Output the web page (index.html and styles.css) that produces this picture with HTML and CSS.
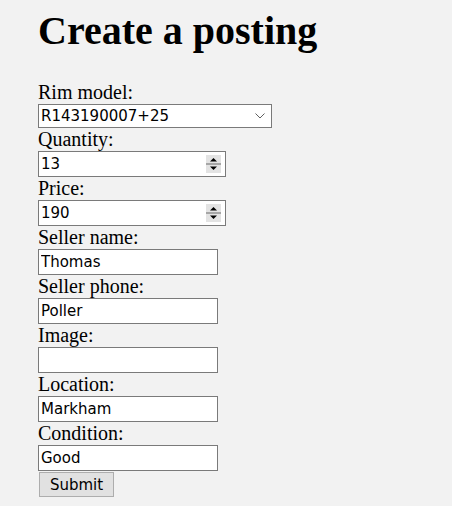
FILE: index.html
```html
<!DOCTYPE html>
<html>
<head>
<meta charset="utf-8">
<link rel="stylesheet" href="styles.css">
</head>
<body>
<div class="page">
  <h1 class="title">Create a posting</h1>
  <form class="form">
    <label class="label">Rim model:</label>
    <select class="select"><option>R143190007+25</option></select>
    <label class="label">Quantity:</label>
    <div class="num">
      <input class="num-input" type="text" value="13">
      <span class="spin"><svg width="15" height="18" viewBox="0 0 15 18"><rect x="0" y="0" width="15" height="18" fill="#e3e3e3"/><rect x="0" y="8" width="15" height="2" fill="#a6a6a6"/><path d="M7.5 3 L11 6.5 L4 6.5 Z" fill="#000"/><path d="M4 11.5 L11 11.5 L7.5 15 Z" fill="#000"/></svg></span>
    </div>
    <label class="label">Price:</label>
    <div class="num">
      <input class="num-input" type="text" value="190">
      <span class="spin"><svg width="15" height="18" viewBox="0 0 15 18"><rect x="0" y="0" width="15" height="18" fill="#e3e3e3"/><rect x="0" y="8" width="15" height="2" fill="#a6a6a6"/><path d="M7.5 3 L11 6.5 L4 6.5 Z" fill="#000"/><path d="M4 11.5 L11 11.5 L7.5 15 Z" fill="#000"/></svg></span>
    </div>
    <label class="label">Seller name:</label>
    <input class="text" type="text" value="Thomas">
    <label class="label">Seller phone:</label>
    <input class="text" type="text" value="Poller">
    <label class="label">Image:</label>
    <input class="text" type="text" value="">
    <label class="label">Location:</label>
    <input class="text" type="text" value="Markham">
    <label class="label">Condition:</label>
    <input class="text" type="text" value="Good">
    <button class="submit" type="button">Submit</button>
  </form>
</div>
</body>
</html>
```

FILE: styles.css
```css
html, body {
  margin: 0;
  padding: 0;
  background: #f2f2f2;
}
body {
  font-family: "Liberation Serif", "Times New Roman", serif;
  font-size: 20px;
  color: #000;
}
.page {
  padding: 8px 0 0 38px;
}
.title {
  font-size: 40px;
  font-weight: bold;
  margin: 0 0 27px 0;
  line-height: 46px;
}
.form {
  display: flex;
  flex-direction: column;
  align-items: flex-start;
}
.label {
  display: block;
  line-height: 23px;
  height: 23px;
}
.select {
  -webkit-appearance: none;
  appearance: none;
  box-sizing: border-box;
  width: 234px;
  height: 24px;
  margin: 0;
  border: 1px solid #7a7a7a;
  border-radius: 0;
  background: #fff url("data:image/svg+xml;utf8,<svg xmlns='http://www.w3.org/2000/svg' width='10' height='6' viewBox='0 0 10 6'><path d='M0.5 0.5 L5 5 L9.5 0.5' fill='none' stroke='%23606060' stroke-width='1'/></svg>") no-repeat right 6px center;
  font-family: "DejaVu Sans", Verdana, sans-serif;
  font-size: 15px;
  color: #000;
  padding: 0 20px 0 2px;
  outline: none;
}
.num {
  box-sizing: border-box;
  display: flex;
  align-items: center;
  width: 188px;
  height: 26px;
  border: 1px solid #7a7a7a;
  background: #fff;
  padding: 0 4px 0 0;
}
.num-input {
  flex: 1;
  min-width: 0;
  border: none;
  outline: none;
  height: 24px;
  margin: 0;
  padding: 0 2px;
  font-family: "DejaVu Sans", Verdana, sans-serif;
  font-size: 15px;
  color: #000;
  background: transparent;
}
.spin {
  display: flex;
  width: 15px;
  height: 18px;
  margin-top: 0;
}
.text {
  box-sizing: border-box;
  width: 180px;
  height: 26px;
  margin: 0;
  border: 1px solid #7a7a7a;
  background: #fff;
  padding: 0 2px;
  font-family: "DejaVu Sans", Verdana, sans-serif;
  font-size: 15px;
  color: #000;
  outline: none;
}
.submit {
  box-sizing: border-box;
  width: 75px;
  height: 25px;
  margin: 1px 0 0 1px;
  padding: 0;
  border: 1px solid #adadad;
  border-radius: 0;
  background: #e1e1e1;
  font-family: "DejaVu Sans", Verdana, sans-serif;
  font-size: 15px;
  color: #000;
}
```
